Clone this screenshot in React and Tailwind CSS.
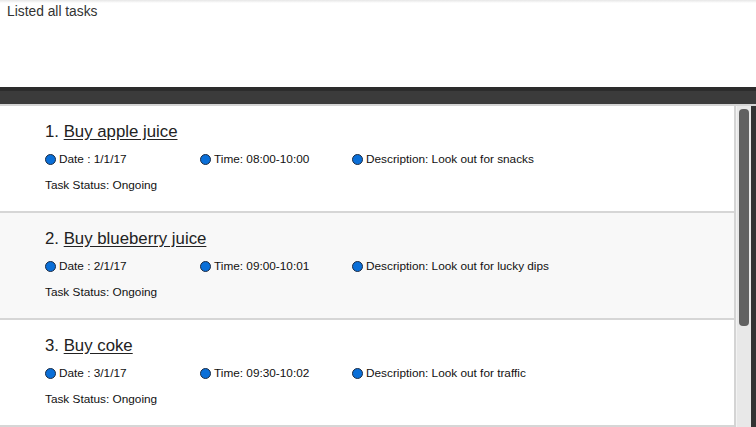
const tasks = [
  { id: 1, name: 'Buy apple juice', date: '1/1/17', time: '08:00-10:00', desc: 'Look out for snacks', status: 'Ongoing' },
  { id: 2, name: 'Buy blueberry juice', date: '2/1/17', time: '09:00-10:01', desc: 'Look out for lucky dips', status: 'Ongoing' },
  { id: 3, name: 'Buy coke', date: '3/1/17', time: '09:30-10:02', desc: 'Look out for traffic', status: 'Ongoing' },
];

function Bullet() {
  return (
    <span className="inline-block w-[11px] h-[11px] rounded-full bg-[#0a6fd8] border border-[#1b2b44] mr-[3px] shrink-0" />
  );
}

function TaskCard({ task, index }) {
  const shaded = index % 2 === 1;
  return (
    <div
      className={`h-[107px] border-b-2 border-[#d6d6d6] pl-[45px] pt-[16px] ${
        shaded ? 'bg-[#f8f8f8]' : 'bg-white'
      }`}
    >
      <div className="text-[16.8px] leading-[20px] text-[#222]">
        {task.id}. <span className="underline underline-offset-[2px]">{task.name}</span>
      </div>
      <div className="flex mt-[10px] text-[11.8px] leading-[14px] text-[#111]">
        <div className="flex items-center w-[155px]">
          <Bullet />
          <span>Date : {task.date}</span>
        </div>
        <div className="flex items-center w-[152px]">
          <Bullet />
          <span>Time: {task.time}</span>
        </div>
        <div className="flex items-center">
          <Bullet />
          <span>Description: {task.desc}</span>
        </div>
      </div>
      <div className="mt-[12px] text-[11.8px] leading-[14px] text-[#111]">
        Task Status: {task.status}
      </div>
    </div>
  );
}

export default function App() {
  return (
    <div className="w-[756px] h-[427px] overflow-hidden bg-white font-['Liberation_Sans',Arial,sans-serif] flex flex-col">
      <div className="h-[87px] shrink-0 bg-gradient-to-b from-[#e6e6e6] via-white to-white bg-[length:100%_6px] bg-no-repeat">
        <p className="pl-[7px] pt-[4px] text-[13.8px] leading-[16px] text-[#333]">Listed all tasks</p>
      </div>

      <div className="h-[17px] shrink-0 bg-[#3b3b3b] border-t-[4px] border-[#2c2c2c]" />

      <div className="flex flex-1 min-h-0 border-t-2 border-[#d4d4d4]">
        <div className="flex-1 min-w-0 border-r-2 border-[#d4d4d4] overflow-hidden">
          {tasks.map((task, i) => (
            <TaskCard key={task.id} task={task} index={i} />
          ))}
        </div>
        <div className="w-[15px] shrink-0 bg-[#e8e8e8] border-l border-[#f2f2f2] pt-[3px] pl-[2px]">
          <div className="w-[10px] h-[217px] rounded-[4px] bg-[#616161]" />
        </div>
        <div className="w-[5px] shrink-0 bg-[#333]" />
      </div>
    </div>
  );
}
